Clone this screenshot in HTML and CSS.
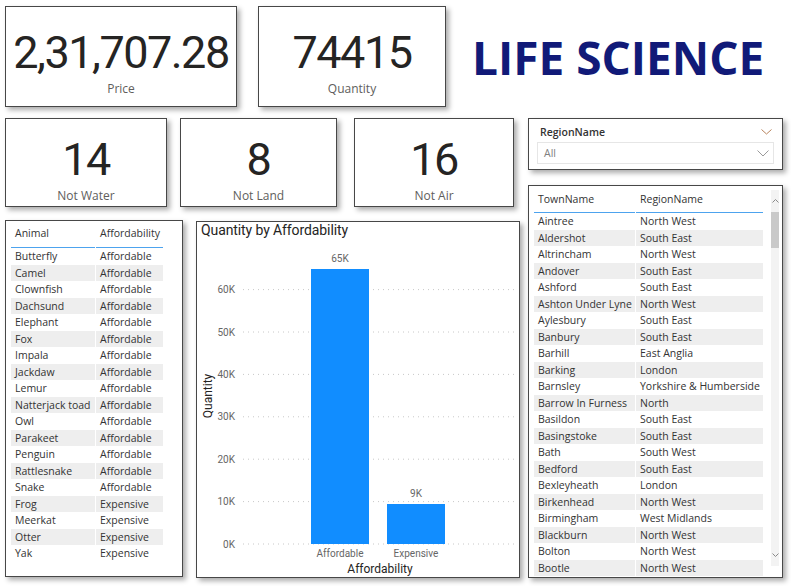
FILE: index.html
```html
<!DOCTYPE html>
<html>
<head>
<meta charset="utf-8">
<link rel="stylesheet" href="styles.css">
</head>
<body>
<div class="page">
  <div class="top">
    <div class="card kpi kpi-price">
      <div class="val">2,31,707.28</div>
      <div class="lbl">Price</div>
    </div>
    <div class="card kpi kpi-qty">
      <div class="val">74415</div>
      <div class="lbl">Quantity</div>
    </div>
    <h1 class="title">LIFE SCIENCE</h1>
  </div>

  <div class="body">
    <div class="left">
      <div class="kpis">
        <div class="card kpi kpi-s1"><div class="val">14</div><div class="lbl">Not Water</div></div>
        <div class="card kpi kpi-s2"><div class="val">8</div><div class="lbl">Not Land</div></div>
        <div class="card kpi kpi-s3"><div class="val">16</div><div class="lbl">Not Air</div></div>
      </div>

      <div class="lower">
        <div class="card animals">
          <div class="grid grid-animals">
            <div class="th">Animal</div><div class="th">Affordability</div>
            <div class="td">Butterfly</div><div class="td">Affordable</div>
            <div class="td alt">Camel</div><div class="td alt">Affordable</div>
            <div class="td">Clownfish</div><div class="td">Affordable</div>
            <div class="td alt">Dachsund</div><div class="td alt">Affordable</div>
            <div class="td">Elephant</div><div class="td">Affordable</div>
            <div class="td alt">Fox</div><div class="td alt">Affordable</div>
            <div class="td">Impala</div><div class="td">Affordable</div>
            <div class="td alt">Jackdaw</div><div class="td alt">Affordable</div>
            <div class="td">Lemur</div><div class="td">Affordable</div>
            <div class="td alt">Natterjack toad</div><div class="td alt">Affordable</div>
            <div class="td">Owl</div><div class="td">Affordable</div>
            <div class="td alt">Parakeet</div><div class="td alt">Affordable</div>
            <div class="td">Penguin</div><div class="td">Affordable</div>
            <div class="td alt">Rattlesnake</div><div class="td alt">Affordable</div>
            <div class="td">Snake</div><div class="td">Affordable</div>
            <div class="td alt">Frog</div><div class="td alt">Expensive</div>
            <div class="td">Meerkat</div><div class="td">Expensive</div>
            <div class="td alt">Otter</div><div class="td alt">Expensive</div>
            <div class="td">Yak</div><div class="td">Expensive</div>
          </div>
        </div>

        <div class="card chart">
          <div class="chart-title">Quantity by Affordability</div>
          <svg class="plot" width="322" height="333" viewBox="0 22 322 333">
            <g class="grid-lines">
              <line x1="46" x2="320" y1="322" y2="322"/>
              <line x1="46" x2="320" y1="279.6" y2="279.6"/>
              <line x1="46" x2="320" y1="237.2" y2="237.2"/>
              <line x1="46" x2="320" y1="194.8" y2="194.8"/>
              <line x1="46" x2="320" y1="152.4" y2="152.4"/>
              <line x1="46" x2="320" y1="110" y2="110"/>
              <line x1="46" x2="320" y1="67.6" y2="67.6"/>
            </g>
            <g class="ylab">
              <text x="38" y="325.5">0K</text>
              <text x="38" y="283.1">10K</text>
              <text x="38" y="240.7">20K</text>
              <text x="38" y="198.3">30K</text>
              <text x="38" y="155.9">40K</text>
              <text x="38" y="113.5">50K</text>
              <text x="38" y="71.1">60K</text>
            </g>
            <rect class="bar" x="114" y="47" width="58" height="275"/>
            <rect class="bar" x="190" y="282" width="58" height="40"/>
            <text class="vlab" x="143" y="39.5">65K</text>
            <text class="vlab" x="219" y="274.5">9K</text>
            <text class="xlab" x="143" y="334.5">Affordable</text>
            <text class="xlab" x="219" y="334.5">Expensive</text>
            <text class="axtitle" x="183" y="351">Affordability</text>
            <text class="axtitle" transform="translate(15,174) rotate(-90)">Quantity</text>
          </svg>
        </div>
      </div>
    </div>

    <div class="right">
      <div class="card slicer">
        <div class="slicer-head">
          <span>RegionName</span>
          <svg class="chev chev-head" width="11" height="6" viewBox="0 0 11 6"><polyline points="0.5,0.5 5.5,5 10.5,0.5"/></svg>
        </div>
        <div class="dropdown">
          <span>All</span>
          <svg class="chev chev-dd" width="12" height="7" viewBox="0 0 12 7"><polyline points="0.5,0.5 6,6 11.5,0.5"/></svg>
        </div>
      </div>

      <div class="card towns">
        <div class="grid grid-towns">
          <div class="th">TownName</div><div class="th">RegionName</div>
          <div class="td">Aintree</div><div class="td">North West</div>
          <div class="td alt">Aldershot</div><div class="td alt">South East</div>
          <div class="td">Altrincham</div><div class="td">North West</div>
          <div class="td alt">Andover</div><div class="td alt">South East</div>
          <div class="td">Ashford</div><div class="td">South East</div>
          <div class="td alt">Ashton Under Lyne</div><div class="td alt">North West</div>
          <div class="td">Aylesbury</div><div class="td">South East</div>
          <div class="td alt">Banbury</div><div class="td alt">South East</div>
          <div class="td">Barhill</div><div class="td">East Anglia</div>
          <div class="td alt">Barking</div><div class="td alt">London</div>
          <div class="td">Barnsley</div><div class="td">Yorkshire &amp; Humberside</div>
          <div class="td alt">Barrow In Furness</div><div class="td alt">North</div>
          <div class="td">Basildon</div><div class="td">South East</div>
          <div class="td alt">Basingstoke</div><div class="td alt">South East</div>
          <div class="td">Bath</div><div class="td">South West</div>
          <div class="td alt">Bedford</div><div class="td alt">South East</div>
          <div class="td">Bexleyheath</div><div class="td">London</div>
          <div class="td alt">Birkenhead</div><div class="td alt">North West</div>
          <div class="td">Birmingham</div><div class="td">West Midlands</div>
          <div class="td alt">Blackburn</div><div class="td alt">North West</div>
          <div class="td">Bolton</div><div class="td">North West</div>
          <div class="td alt">Bootle</div><div class="td alt">North West</div>
        </div>
        <div class="scrollbar">
          <div class="sb-btn"><svg width="7" height="4" viewBox="0 0 7 4"><polyline points="0.5,3.5 3.5,0.5 6.5,3.5"/></svg></div>
          <div class="sb-thumb"></div>
          <div class="sb-track"></div>
          <div class="sb-btn"><svg width="7" height="4" viewBox="0 0 7 4"><polyline points="0.5,0.5 3.5,3.5 6.5,0.5"/></svg></div>
        </div>
      </div>
    </div>
  </div>
</div>
</body>
</html>
```

FILE: styles.css
```css
* { box-sizing: border-box; }

html, body {
  margin: 0;
  padding: 0;
  background: #ffffff;
}

body {
  width: 791px;
  height: 586px;
  overflow: hidden;
  font-family: "Open Sans", "Noto Sans", sans-serif;
  color: #333333;
}

.page {
  padding: 6px 0 0 5px;
}

.card {
  background: #ffffff;
  border: 1px solid #474747;
  box-shadow: 3px 3px 5px rgba(0, 0, 0, 0.33);
}

/* ---------- top row ---------- */
.top {
  display: flex;
  align-items: flex-start;
  height: 101px;
}

.kpi {
  display: flex;
  flex-direction: column;
  align-items: center;
}

.kpi .val {
  font-family: "Roboto", sans-serif;
  font-weight: 400;
  font-size: 45px;
  line-height: 45px;
  letter-spacing: -1.5px;
  color: #252423;
  white-space: nowrap;
}

.kpi .lbl {
  margin-top: 6px;
  font-size: 12px;
  line-height: 16px;
  color: #605e5c;
}

.kpi-price {
  width: 232px;
  height: 101px;
  padding-top: 23px;
}

.kpi-qty {
  width: 188px;
  height: 101px;
  margin-left: 21px;
  padding-top: 23px;
}

.title {
  margin: 28px 0 0 26px;
  font-family: "Open Sans", sans-serif;
  font-weight: 700;
  font-size: 46px;
  line-height: 46px;
  color: #111a78;
  white-space: nowrap;
}

/* ---------- body ---------- */
.body {
  display: flex;
  margin-top: 11px;
}

.left {
  width: 515px;
}

.right {
  width: 255px;
  margin-left: 8px;
}

.kpis {
  display: flex;
  height: 89px;
}

.kpi-s1, .kpi-s2, .kpi-s3 {
  height: 89px;
  padding-top: 18px;
}

.kpi-s1 { width: 162px; }
.kpi-s2 { width: 157px; margin-left: 13px; }
.kpi-s3 { width: 160px; margin-left: 17px; }

.lower {
  display: flex;
  align-items: flex-start;
  margin-top: 13px;
}

/* ---------- tables ---------- */
.grid {
  display: grid;
  column-gap: 1px;
  font-size: 10.5px;
  color: #333333;
}

.th {
  height: 27px;
  line-height: 16px;
  border-bottom: 1px solid #4da3ee;
  white-space: nowrap;
  padding-left: 4px;
}

.td {
  height: 16.5px;
  line-height: 16.5px;
  padding-left: 4px;
  white-space: nowrap;
  overflow: hidden;
}

.td.alt {
  background: #eeeeee;
}

.animals {
  width: 178px;
  height: 357px;
  padding-left: 5px;
}

.grid-animals {
  grid-template-columns: 84px 67px;
}

.grid-animals .th {
  padding-top: 4px;
}

.towns {
  display: flex;
  align-items: flex-start;
  width: 255px;
  height: 393px;
  margin-top: 15px;
  padding-left: 5px;
  overflow: hidden;
}

.grid-towns {
  grid-template-columns: 101px 127px;
  flex: none;
}

.grid-towns .th {
  height: 27px;
  padding-top: 5px;
}

.scrollbar {
  display: flex;
  flex-direction: column;
  width: 8px;
  height: 376px;
  margin: 4px 0 0 8px;
  background: #f3f3f3;
}

.sb-btn {
  height: 22px;
  display: flex;
  align-items: center;
  justify-content: center;
}

.sb-btn svg polyline {
  fill: none;
  stroke: #8a8a8a;
  stroke-width: 1;
}

.sb-thumb {
  height: 36px;
  background: #c9c9c9;
}

.sb-track {
  flex: 1;
}

/* ---------- slicer ---------- */
.slicer {
  width: 255px;
  height: 52px;
}

.slicer-head {
  display: flex;
  justify-content: space-between;
  align-items: center;
  height: 19px;
  margin-top: 3px;
  padding: 0 10px 0 11px;
  font-size: 10.5px;
  font-weight: 600;
  color: #333333;
}

.dropdown {
  display: flex;
  justify-content: space-between;
  align-items: center;
  width: 237px;
  height: 22px;
  margin: 1px 0 0 8px;
  padding: 0 4px 0 6px;
  border: 1px solid #e6e6e6;
  font-size: 10.5px;
  color: #808080;
}

.chev polyline {
  fill: none;
  stroke-width: 1;
}

.chev-head polyline { stroke: #b8845e; }
.chev-dd polyline { stroke: #9a9a9a; }

/* ---------- chart ---------- */
.chart {
  width: 324px;
  height: 357px;
  margin-left: 13px;
  margin-top: 1px;
}

.chart-title {
  height: 22px;
  padding-left: 4px;
  font-family: "Roboto", sans-serif;
  font-size: 14px;
  line-height: 17px;
  letter-spacing: -0.1px;
  color: #252423;
}

.plot {
  display: block;
}

.grid-lines line {
  stroke: #c8c8c8;
  stroke-width: 1;
  stroke-dasharray: 1 4;
}

.bar {
  fill: #118dff;
}

.ylab text {
  font-family: "Roboto", sans-serif;
  font-size: 10px;
  fill: #666666;
  text-anchor: end;
}

.vlab, .xlab {
  font-family: "Roboto", sans-serif;
  font-size: 10px;
  fill: #666666;
  text-anchor: middle;
}

.axtitle {
  font-family: "Roboto", sans-serif;
  font-size: 12px;
  fill: #252423;
  text-anchor: middle;
}
```
